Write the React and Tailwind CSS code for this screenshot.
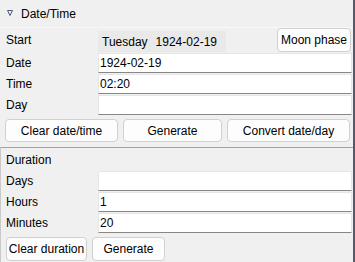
const Field = ({ label, value }) => (
  <div className="flex h-[21px] items-start">
    <span className="w-[98px] pl-[6px] leading-[20px]">{label}</span>
    <div className="h-[20px] w-[254px] bg-white border border-[#e6e6e6] border-b-[#878787] pl-[1px] leading-[18px]">
      {value}
    </div>
  </div>
);

const Btn = ({ children, className = "" }) => (
  <button
    className={
      "h-[23px] rounded-[4px] border border-[#d0d0d0] bg-[#fdfdfd] text-black leading-[20px] " +
      className
    }
  >
    {children}
  </button>
);

export default function App() {
  return (
    <div className="w-[355px] h-[262px] overflow-hidden bg-[#f0f0f0] border-r-2 border-[#58586a] text-[12px] text-black font-['Segoe_UI','Liberation_Sans',sans-serif]">
      {/* Header */}
      <div className="h-[28px] flex items-center gap-[8px] pl-[7px] border-b border-[#f7f7f7]">
        <svg width="6" height="6" viewBox="0 0 6 6" className="mt-[-1px]">
          <path d="M0.5 0.5 H5.5 L3 5.5 Z" fill="none" stroke="#4a5a80" strokeWidth="1" />
        </svg>
        <span>Date/Time</span>
      </div>

      {/* Start row */}
      <div className="flex h-[24px] items-center">
        <span className="w-[98px] pl-[6px]">Start</span>
        <div className="h-[21px] w-[128px] bg-[#e9e9e9] flex items-center gap-[8px] pl-[4px] mt-[3px]">
          <span>Tuesday</span>
          <span>1924-02-19</span>
        </div>
        <Btn className="ml-auto mr-[2px] w-[74px] h-[24px]">Moon phase</Btn>
      </div>

      <div className="flex flex-col mt-[1px]">
        <Field label="Date" value="1924-02-19" />
        <Field label="Time" value="02:20" />
        <Field label="Day" value="" />
      </div>

      <div className="flex gap-[5px] pl-[5px] mt-[3px]">
        <Btn className="w-[113px]">Clear date/time</Btn>
        <Btn className="w-[99px]">Generate</Btn>
        <Btn className="w-[123px]">Convert date/day</Btn>
      </div>

      {/* Duration */}
      <div className="mt-[5px] border-t border-[#a3a3a3] border-l border-l-[#c9c9c9] h-[120px]">
        <div className="h-[23px] flex items-center pl-[5px]">Duration</div>
        <div className="ml-[-1px] flex flex-col">
          <Field label="Days" value="" />
          <Field label="Hours" value="1" />
          <Field label="Minutes" value="20" />
        </div>
        <div className="flex gap-[5px] pl-[5px] mt-[3px]">
          <Btn className="w-[81px] h-[24px]">Clear duration</Btn>
          <Btn className="w-[73px] h-[24px]">Generate</Btn>
        </div>
      </div>
    </div>
  );
}
